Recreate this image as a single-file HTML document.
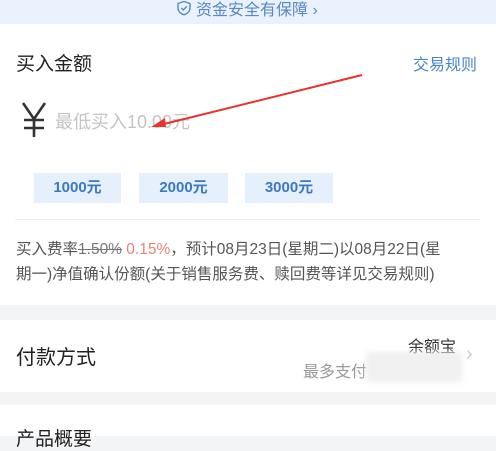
<!DOCTYPE html>
<html><head><meta charset="utf-8"><style>
*{margin:0;padding:0;box-sizing:border-box}
body{width:496px;height:436px;overflow:hidden;background:#f3f4f6;font-family:"Liberation Sans","Noto Sans CJK SC",sans-serif;position:relative}
.a{position:absolute;white-space:nowrap}
.btn{position:absolute;top:173px;height:30px;background:#e6f0fc;color:#3d78c2;font-weight:bold;font-size:15px;line-height:30px;text-align:center}
</style></head><body>
<div class="a" style="left:0;top:0;width:496px;height:24px;background:#e9f1fc"></div>
<svg class="a" style="left:176px;top:0" width="16" height="16" viewBox="0 0 16 16"><path d="M8 1.5 L14 3.5 V8 C14 11.5 11 13.8 8 14.8 C5 13.8 2 11.5 2 8 V3.5 Z" fill="none" stroke="#5a88c4" stroke-width="1.4"/><path d="M5.3 8 L7.3 10 L10.8 6.3" fill="none" stroke="#5a88c4" stroke-width="1.4"/></svg>
<div class="a" style="left:196px;top:-4px;font-size:16px;color:#5a88c4">资金安全有保障 ›</div>
<div class="a" style="left:0;top:24px;width:496px;height:281px;background:#fff"></div>
<div class="a" style="left:16px;top:49px;font-size:19px;color:#222">买入金额</div>
<div class="a" style="left:413px;top:51px;font-size:16px;color:#4a86c8">交易规则</div>
<svg class="a" style="left:22px;top:102px" width="24" height="36" viewBox="0 0 24 36"><path d="M1 1 L12 17 L23 1 M12 17 V35 M2 18 H22 M2 26 H22" fill="none" stroke="#333" stroke-width="2.6"/></svg>
<div class="a" style="left:55px;top:108px;font-size:18px;color:#c4c4c4">最低买入10.00元</div>
<svg class="a" style="left:0;top:0" width="496" height="220"><line x1="362" y1="75" x2="160" y2="125" stroke="#e8322c" stroke-width="2"/><path d="M151 127 L165 118 L166 127 Z" fill="#e8322c"/></svg>
<div class="btn" style="left:34px;width:87px">1000元</div>
<div class="btn" style="left:139px;width:89px">2000元</div>
<div class="btn" style="left:245px;width:88px">3000元</div>
<div class="a" style="left:15px;top:219px;width:465px;height:1px;background:#eee"></div>
<div class="a" style="left:16px;top:237px;font-size:15.5px;color:#555;line-height:25px">买入费率<s style="color:#777">1.50%</s> <span style="color:#e8837a">0.15%</span>，预计08月23日(星期二)以08月22日(星<br>期一)净值确认份额(关于销售服务费、赎回费等详见交易规则)</div>
<div class="a" style="left:0;top:320px;width:496px;height:72px;background:#fff"></div>
<div class="a" style="left:16px;top:341px;font-size:20px;color:#222">付款方式</div>
<div class="a" style="left:408px;top:333px;font-size:16px;color:#333">余额宝</div>
<div class="a" style="left:303px;top:358px;font-size:16px;color:#999">最多支付</div>
<div class="a" style="left:366px;top:352px;width:96px;height:30px;background:#f0f0f0;filter:blur(3px)"></div>
<div class="a" style="left:466px;top:343px;font-size:20px;color:#ccc">›</div>
<div class="a" style="left:0;top:405px;width:496px;height:31px;background:#fff"></div>
<div class="a" style="left:16px;top:424px;font-size:19px;color:#222">产品概要</div>
</body></html>
